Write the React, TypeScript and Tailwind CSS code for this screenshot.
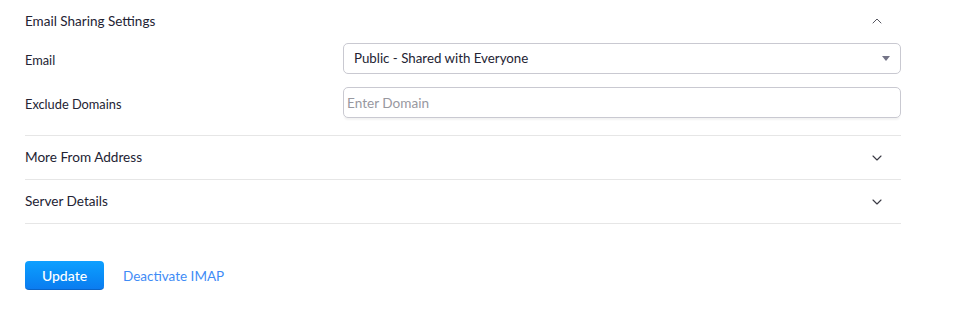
import { ChevronDown, ChevronUp } from "lucide-react";

const font = { fontFamily: "Lato, 'Open Sans', sans-serif" };

const Section = ({ title }: { title: string }) => (
  <div className="flex h-[44px] items-center justify-between border-b border-[#e6e6e6] pr-[16px]">
    <span className="text-[13.6px] text-[#232333]">{title}</span>
    <ChevronDown size={16} strokeWidth={1.7} className="text-[#3a3a44]" />
  </div>
);

export default function App() {
  return (
    <div className="w-[977px] h-[313px] bg-white" style={font}>
      <div className="w-[876px] ml-[25px]">
        <div className="flex h-[42px] items-center justify-between pr-[16px]">
          <span className="text-[13.5px] text-[#232333]">Email Sharing Settings</span>
          <ChevronUp size={16} strokeWidth={1.5} className="text-[#55555f]" />
        </div>

        <div className="grid grid-cols-[318px_1fr] gap-y-[13px] pt-[1px] pb-[17px] border-b border-[#e6e6e6]">
          <span className="flex items-center pt-[5px] text-[12.8px] text-[#232333]">Email</span>
          <div className="flex h-[31px] items-center justify-between rounded-[5px] border border-[#c9c9d1] pl-[10px] pr-[10px]">
            <span className="text-[13.3px] text-[#232333]">Public - Shared with Everyone</span>
            <span className="h-0 w-0 border-x-[4px] border-t-[5px] border-x-transparent border-t-[#747487]" />
          </div>

          <span className="flex items-center pt-[4px] text-[12.8px] text-[#232333]">Exclude Domains</span>
          <input
            placeholder="Enter Domain"
            className="h-[31px] rounded-[5px] border border-[#c9c9d1] px-[3px] text-[13.6px] text-[#232333] placeholder:text-[#98989f] outline-none shadow-[0_3px_2px_-1px_rgba(0,0,0,0.05)]"
          />
        </div>

        <Section title="More From Address" />
        <Section title="Server Details" />

        <div className="mt-[37px] flex items-center gap-[19px]">
          <button className="h-[29px] w-[79px] rounded-[4px] bg-gradient-to-b from-[#0ea0ff] to-[#0b7cf0] border-b border-[#0a64c8] text-[14px] font-medium text-white">
            Update
          </button>
          <a className="text-[13.5px] text-[#3f8cf6] mt-[1px]">Deactivate IMAP</a>
        </div>
      </div>
    </div>
  );
}
